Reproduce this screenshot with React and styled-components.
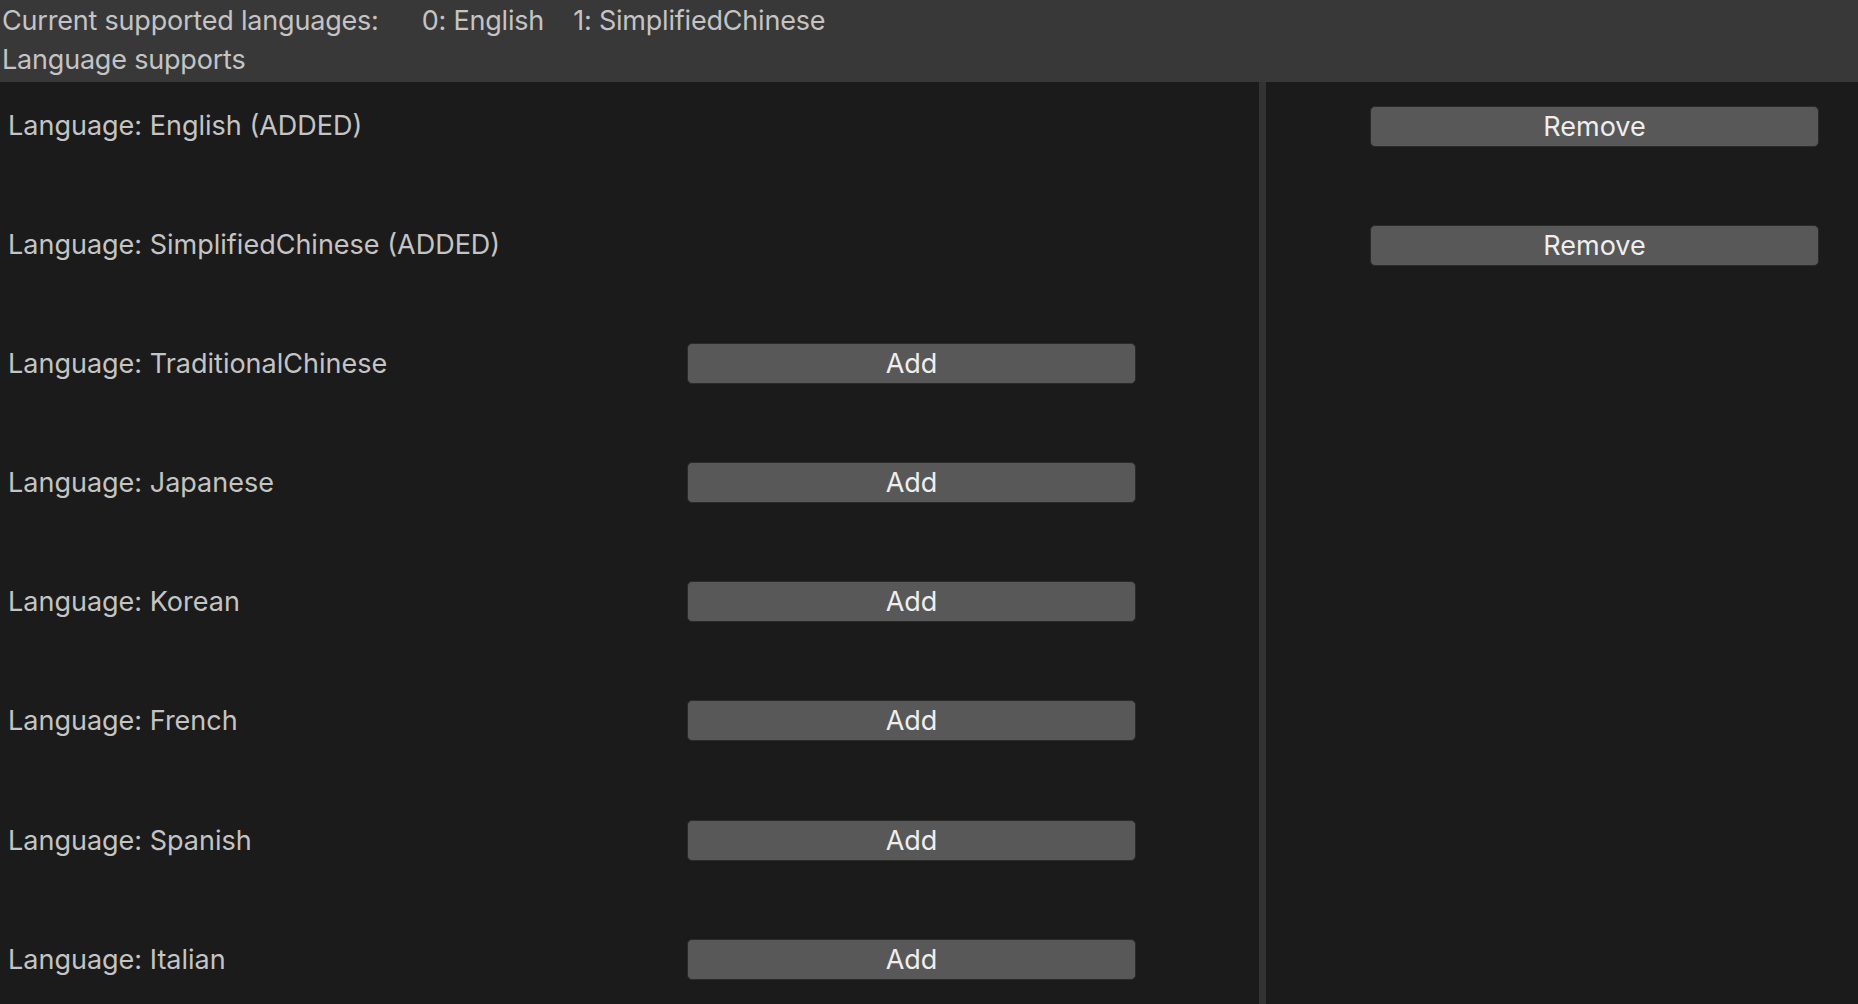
import React from "react";
import styled, { createGlobalStyle } from "styled-components";

const GlobalStyle = createGlobalStyle`
  html, body {
    margin: 0;
    padding: 0;
    background: #1b1b1b;
    height: 100%;
    overflow: hidden;
  }
  #root {
    height: 100%;
  }
`;

const Page = styled.div`
  height: 100vh;
  display: flex;
  flex-direction: column;
  background: #1b1b1b;
  font-family: "Inter", "Noto Sans", sans-serif;
  color: #c4c4c4;
`;

const Header = styled.div`
  height: 82px;
  background: #383838;
  display: flex;
  flex-direction: column;
  justify-content: center;
  gap: 9px;
  padding-left: 2px;
  padding-bottom: 2px;
  box-sizing: border-box;
`;

const HeaderLine = styled.div`
  display: flex;
  font-size: 27px;
  line-height: 30px;
  letter-spacing: -0.2px;
`;

const HeaderItem = styled.span`
  margin-right: ${(p) => p.gap || 0}px;
`;

const Body = styled.div`
  flex: 1;
  display: flex;
  min-height: 0;
`;

const LeftPane = styled.div`
  width: 1259px;
  display: flex;
  flex-direction: column;
  gap: 79.2px;
  padding-top: 23px;
`;

const Divider = styled.div`
  width: 7px;
  background: #333333;
`;

const RightPane = styled.div`
  flex: 1;
  display: flex;
  flex-direction: column;
  gap: 79.2px;
  padding-top: 24px;
  padding-left: 104px;
`;

const Row = styled.div`
  height: 40px;
  display: flex;
  align-items: center;
`;

const Label = styled.div`
  width: 679px;
  padding-left: 8px;
  font-size: 27px;
  white-space: nowrap;
`;

const Button = styled.button`
  width: 449px;
  height: 41px;
  background: #585858;
  border: 1px solid #2a2a2a;
  border-radius: 5px;
  color: #eeeeee;
  font-family: "Inter", "Noto Sans", sans-serif;
  font-size: 27px;
  padding: 0;
  box-sizing: border-box;
`;

const languages = [
  { name: "English", added: true },
  { name: "SimplifiedChinese", added: true },
  { name: "TraditionalChinese" },
  { name: "Japanese" },
  { name: "Korean" },
  { name: "French" },
  { name: "Spanish" },
  { name: "Italian" },
];

export default function App() {
  return (
    <Page>
      <GlobalStyle />
      <Header>
        <HeaderLine>
          <HeaderItem gap={43}>Current supported languages:</HeaderItem>
          <HeaderItem gap={29}>0: English</HeaderItem>
          <HeaderItem>1: SimplifiedChinese</HeaderItem>
        </HeaderLine>
        <HeaderLine>Language supports</HeaderLine>
      </Header>
      <Body>
        <LeftPane>
          {languages.map((l) => (
            <Row key={l.name}>
              <Label>
                Language: {l.name}
                {l.added ? " (ADDED)" : ""}
              </Label>
              {!l.added && <Button>Add</Button>}
            </Row>
          ))}
        </LeftPane>
        <Divider />
        <RightPane>
          {languages
            .filter((l) => l.added)
            .map((l) => (
              <Row key={l.name}>
                <Button>Remove</Button>
              </Row>
            ))}
        </RightPane>
      </Body>
    </Page>
  );
}
